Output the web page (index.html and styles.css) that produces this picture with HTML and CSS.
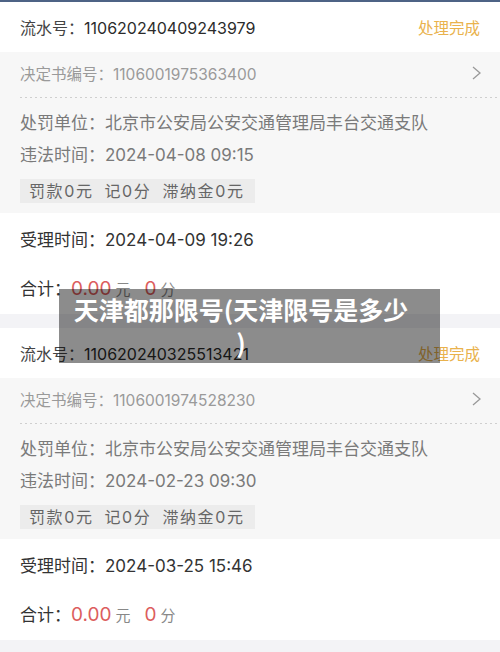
FILE: index.html
```html
<!DOCTYPE html>
<html lang="zh-CN">
<head>
    <meta charset="UTF-8">
    <meta name="viewport" content="width=device-width, initial-scale=1.0">
    <title>违法处理记录</title>
    <link rel="stylesheet" href="styles.css">
</head>
<body>
    <div class="topbar"></div>

    <div class="card">
        <div class="card-head">
            <span class="serial"><span class="label">流水号：</span>110620240409243979</span>
            <span class="status">处理完成</span>
        </div>
        <div class="card-body">
            <div class="doc-row">
                <span>决定书编号：1106001975363400</span>
                <svg class="chevron" width="9" height="14" viewBox="0 0 9 14"><polyline points="1,1 8,7 1,13" /></svg>
            </div>
            <div class="dots"></div>
            <div class="info-row">处罚单位：北京市公安局公安交通管理局丰台交通支队</div>
            <div class="info-row">违法时间：2024-04-08 09:15</div>
            <div class="tags"><span>罚款0元</span><span>记0分</span><span>滞纳金0元</span></div>
        </div>
        <div class="card-foot">
            <div class="foot-row">受理时间：2024-04-09 19:26</div>
            <div class="foot-row total">合计：<em>0.00</em><small>元</small><em class="pts">0</em><small>分</small></div>
        </div>
    </div>

    <div class="card">
        <div class="card-head">
            <span class="serial"><span class="label">流水号：</span>110620240325513421</span>
            <span class="status">处理完成</span>
        </div>
        <div class="card-body">
            <div class="doc-row">
                <span>决定书编号：1106001974528230</span>
                <svg class="chevron" width="9" height="14" viewBox="0 0 9 14"><polyline points="1,1 8,7 1,13" /></svg>
            </div>
            <div class="dots"></div>
            <div class="info-row">处罚单位：北京市公安局公安交通管理局丰台交通支队</div>
            <div class="info-row">违法时间：2024-02-23 09:30</div>
            <div class="tags"><span>罚款0元</span><span>记0分</span><span>滞纳金0元</span></div>
        </div>
        <div class="card-foot">
            <div class="foot-row">受理时间：2024-03-25 15:46</div>
            <div class="foot-row total">合计：<em>0.00</em><small>元</small><em class="pts">0</em><small>分</small></div>
        </div>
    </div>

    <div class="banner">天津都那限号(天津限号是多少<br>)</div>
</body>
</html>
```

FILE: styles.css
```css
body {
    margin: 0;
    padding: 0;
    background: #f3f3f6;
    font-family: "Inter", "Noto Sans CJK SC", sans-serif;
    color: #333;
    position: relative;
}
.topbar {
    height: 2px;
    background: #4d6385;
}
.card {
    background: #fff;
    margin-bottom: 14px;
}
.card-head {
    height: 50px;
    padding: 0 20px;
    display: flex;
    align-items: center;
    justify-content: space-between;
    font-size: 16px;
}
.card-head .label {
    color: #444;
}
.serial {
    color: #2b2b2b;
}
.status {
    color: #e9b24d;
    font-size: 15.5px;
}
.card-body {
    background: #f7f7f7;
    padding: 0 0 10px 20px;
}
.doc-row {
    height: 42px;
    padding-right: 19px;
    display: flex;
    align-items: center;
    justify-content: space-between;
    font-size: 15.5px;
    color: #9a9a9a;
}
.chevron polyline {
    fill: none;
    stroke: #999;
    stroke-width: 1.3;
}
.dots {
    height: 1px;
    margin-top: 3px;
    background: repeating-linear-gradient(to right, #cfcfcf 0 2px, transparent 2px 5px);
}
.info-row {
    line-height: 32px;
    font-size: 17px;
    color: #7a7a7a;
}
.dots + .info-row {
    margin-top: 9px;
}
.tags {
    display: inline-flex;
    margin-top: 8px;
    height: 24px;
    line-height: 24px;
    padding: 0 10px 0 9px;
    background: #ececec;
    color: #666;
    font-size: 16px;
    letter-spacing: 1.6px;
}
.tags span + span {
    margin-left: 11px;
}
.card-foot {
    padding: 0 20px;
}
.foot-row {
    height: 50px;
    display: flex;
    align-items: center;
    font-size: 17px;
    color: #333;
}
.total {
    margin-top: 1px;
    align-items: baseline;
    line-height: 50px;
}
.total em {
    font-style: normal;
    font-size: 19px;
    color: #dc5d5d;
}
.total small {
    font-size: 15px;
    color: #888;
    margin-left: 4px;
}
.total .pts {
    margin-left: 14px;
}
.banner {
    position: absolute;
    left: 59px;
    top: 289px;
    width: 381px;
    box-sizing: border-box;
    padding: 4px 30px 4px 13px;
    background: rgba(0, 0, 0, 0.45);
    color: #fff;
    font-family: "Noto Sans CJK SC", sans-serif;
    font-weight: 700;
    font-size: 25px;
    line-height: 33px;
    text-align: center;
}
```
